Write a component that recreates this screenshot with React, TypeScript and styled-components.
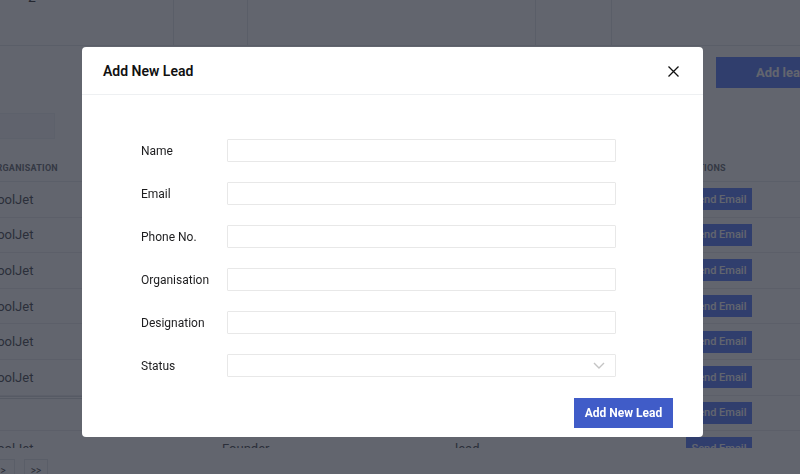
import styled, { createGlobalStyle } from "styled-components";

const GlobalStyle = createGlobalStyle`
  html, body {
    margin: 0;
    padding: 0;
    overflow: hidden;
    background: #ffffff;
    font-family: Roboto, "Noto Sans", "Liberation Sans", sans-serif;
  }
  * {
    box-sizing: border-box;
  }
`;

// ---------- page behind the modal ----------

const Page = styled.div`
  width: 800px;
  height: 474px;
  overflow: hidden;
  background: #ffffff;
  color: #333;
`;

const StatsBar = styled.div`
  display: grid;
  grid-template-columns: 174px 74px 288px 76px 1fr;
  height: 46px;
  border-bottom: 1px solid #e2e4e8;
`;

const StatCell = styled.div`
  border-right: 1px solid #e2e4e8;
  padding-left: 28px;
  overflow: hidden;
  &:last-child {
    border-right: none;
  }
`;

const StatValue = styled.div`
  margin-top: -11px;
  font-size: 14px;
  color: #222;
`;

const Toolbar = styled.div`
  display: flex;
  flex-direction: column;
  height: 109px;
  background: #ffffff;
`;

const ToolbarTop = styled.div`
  display: flex;
  justify-content: flex-end;
  padding-top: 11px;
`;

const AddLeadButton = styled.button`
  width: 100px;
  height: 31px;
  margin-right: -16px;
  border: none;
  background: #4d72fa;
  color: #ffffff;
  font-family: inherit;
  font-size: 13px;
  font-weight: 700;
  text-align: left;
  padding-left: 40px;
`;

const SearchBox = styled.div`
  width: 70px;
  height: 26px;
  margin: 25px 0 0 -15px;
  background: #f7f8fa;
  border: 1px solid #eef0f3;
`;

const Table = styled.div`
  margin-left: -19px;
  width: 835px;
`;

const Columns = styled.div`
  display: grid;
  grid-template-columns: 232px 233px 231px 1fr;
  align-items: center;
`;

const HeaderRow = styled(Columns)`
  height: 27px;
  border-bottom: 1px solid #e6e8ec;
`;

const HeaderCell = styled.div`
  padding-left: 9px;
  font-size: 9px;
  font-weight: 700;
  letter-spacing: 0.25px;
  color: #5c6068;
  text-transform: uppercase;
`;

const TableBody = styled.div`
  height: 266px;
  overflow: hidden;
`;

const Row = styled(Columns)`
  height: 35.6px;
  border-bottom: 1px solid #e8eaee;
`;

const Cell = styled.div<{ $thick?: boolean }>`
  align-self: stretch;
  display: flex;
  align-items: center;
  padding-left: 9px;
  font-size: 13px;
  color: #3a3d44;
  border-top: ${(p) => (p.$thick ? "3px double #d4d7dc" : "none")};
`;

const SendButton = styled.button`
  width: 66px;
  height: 22px;
  border: none;
  background: #4d72fa;
  color: #ffffff;
  font-family: inherit;
  font-size: 11px;
  font-weight: 500;
  padding: 0;
`;

const Pagination = styled.div`
  display: flex;
  gap: 9px;
  margin: 11px 0 0 -9px;
`;

const PageButton = styled.button`
  width: 24px;
  height: 22px;
  border: 1px solid #e3e5e9;
  background: #ffffff;
  color: #333;
  font-family: inherit;
  font-size: 10px;
  padding: 0;
`;

// ---------- modal ----------

const Backdrop = styled.div`
  position: fixed;
  inset: 0;
  background: rgba(37, 42, 54, 0.72);
  display: flex;
  align-items: flex-start;
  padding: 47px 0 0 82px;
`;

const ModalBox = styled.div`
  width: 621px;
  height: 390px;
  background: #ffffff;
  border-radius: 4px;
  display: flex;
  flex-direction: column;
`;

const ModalHeader = styled.div`
  height: 48px;
  display: flex;
  align-items: center;
  justify-content: space-between;
  padding: 0 24px 0 21px;
  border-bottom: 1px solid #eef0f2;
`;

const ModalTitle = styled.h5`
  margin: 0;
  font-size: 14px;
  font-weight: 600;
  color: #111;
`;

const CloseButton = styled.button`
  width: 11px;
  height: 11px;
  padding: 0;
  border: none;
  background: none;
  display: flex;
  margin-top: 1px;
`;

const ModalBody = styled.div`
  padding: 44px 0 0 59px;
`;

const Form = styled.div`
  display: grid;
  grid-template-columns: 86px 389px;
  row-gap: 20px;
  align-items: center;
`;

const Label = styled.label`
  font-size: 12px;
  color: #1d1d1f;
`;

const Field = styled.div`
  position: relative;
  height: 23px;
  border: 1px solid #e8e8e8;
  border-radius: 1px;
  background: #ffffff;
`;

const Chevron = styled.svg`
  position: absolute;
  right: 10px;
  top: 7px;
`;

const ModalFooter = styled.div`
  display: flex;
  justify-content: flex-end;
  padding: 21px 30px 0 0;
`;

const SubmitButton = styled.button`
  width: 99px;
  height: 30px;
  border: none;
  background: #405cc8;
  color: #ffffff;
  font-family: inherit;
  font-size: 12px;
  font-weight: 700;
  padding: 0;
`;

const rows = [
  { org: "ToolJet", designation: "", status: "" },
  { org: "ToolJet", designation: "", status: "" },
  { org: "ToolJet", designation: "", status: "" },
  { org: "ToolJet", designation: "", status: "" },
  { org: "ToolJet", designation: "", status: "" },
  { org: "ToolJet", designation: "", status: "" },
  { org: "", designation: "", status: "", thick: true },
  { org: "ToolJet", designation: "Founder", status: "lead" },
];

const fields = ["Name", "Email", "Phone No.", "Organisation", "Designation"];

export default function App() {
  return (
    <>
      <GlobalStyle />
      <Page>
        <StatsBar>
          <StatCell>
            <StatValue>2</StatValue>
          </StatCell>
          <StatCell />
          <StatCell />
          <StatCell />
          <StatCell />
        </StatsBar>
        <Toolbar>
          <ToolbarTop>
            <AddLeadButton>Add lead</AddLeadButton>
          </ToolbarTop>
          <SearchBox />
        </Toolbar>
        <Table>
          <HeaderRow>
            <HeaderCell>Organisation</HeaderCell>
            <HeaderCell>Designation</HeaderCell>
            <HeaderCell>Status</HeaderCell>
            <HeaderCell>Actions</HeaderCell>
          </HeaderRow>
          <TableBody>
            {rows.map((r, i) => (
              <Row key={i}>
                <Cell $thick={r.thick}>{r.org}</Cell>
                <Cell $thick={r.thick}>{r.designation}</Cell>
                <Cell>{r.status}</Cell>
                <Cell>
                  <SendButton>Send Email</SendButton>
                </Cell>
              </Row>
            ))}
          </TableBody>
        </Table>
        <Pagination>
          <PageButton>&gt;</PageButton>
          <PageButton>&gt;&gt;</PageButton>
        </Pagination>
      </Page>

      <Backdrop>
        <ModalBox>
          <ModalHeader>
            <ModalTitle>Add New Lead</ModalTitle>
            <CloseButton>
              <svg width="11" height="11" viewBox="0 0 11 11">
                <path
                  d="M0.5 0.5L10.5 10.5M10.5 0.5L0.5 10.5"
                  stroke="#111"
                  strokeWidth="1.3"
                  fill="none"
                />
              </svg>
            </CloseButton>
          </ModalHeader>
          <ModalBody>
            <Form>
              {fields.map((f) => (
                <>
                  <Label key={f + "-l"}>{f}</Label>
                  <Field key={f + "-f"} />
                </>
              ))}
              <Label>Status</Label>
              <Field>
                <Chevron width="12" height="7" viewBox="0 0 12 7">
                  <path
                    d="M1 1L6 6L11 1"
                    stroke="#c4c4c4"
                    strokeWidth="1.4"
                    fill="none"
                  />
                </Chevron>
              </Field>
            </Form>
          </ModalBody>
          <ModalFooter>
            <SubmitButton>Add New Lead</SubmitButton>
          </ModalFooter>
        </ModalBox>
      </Backdrop>
    </>
  );
}
